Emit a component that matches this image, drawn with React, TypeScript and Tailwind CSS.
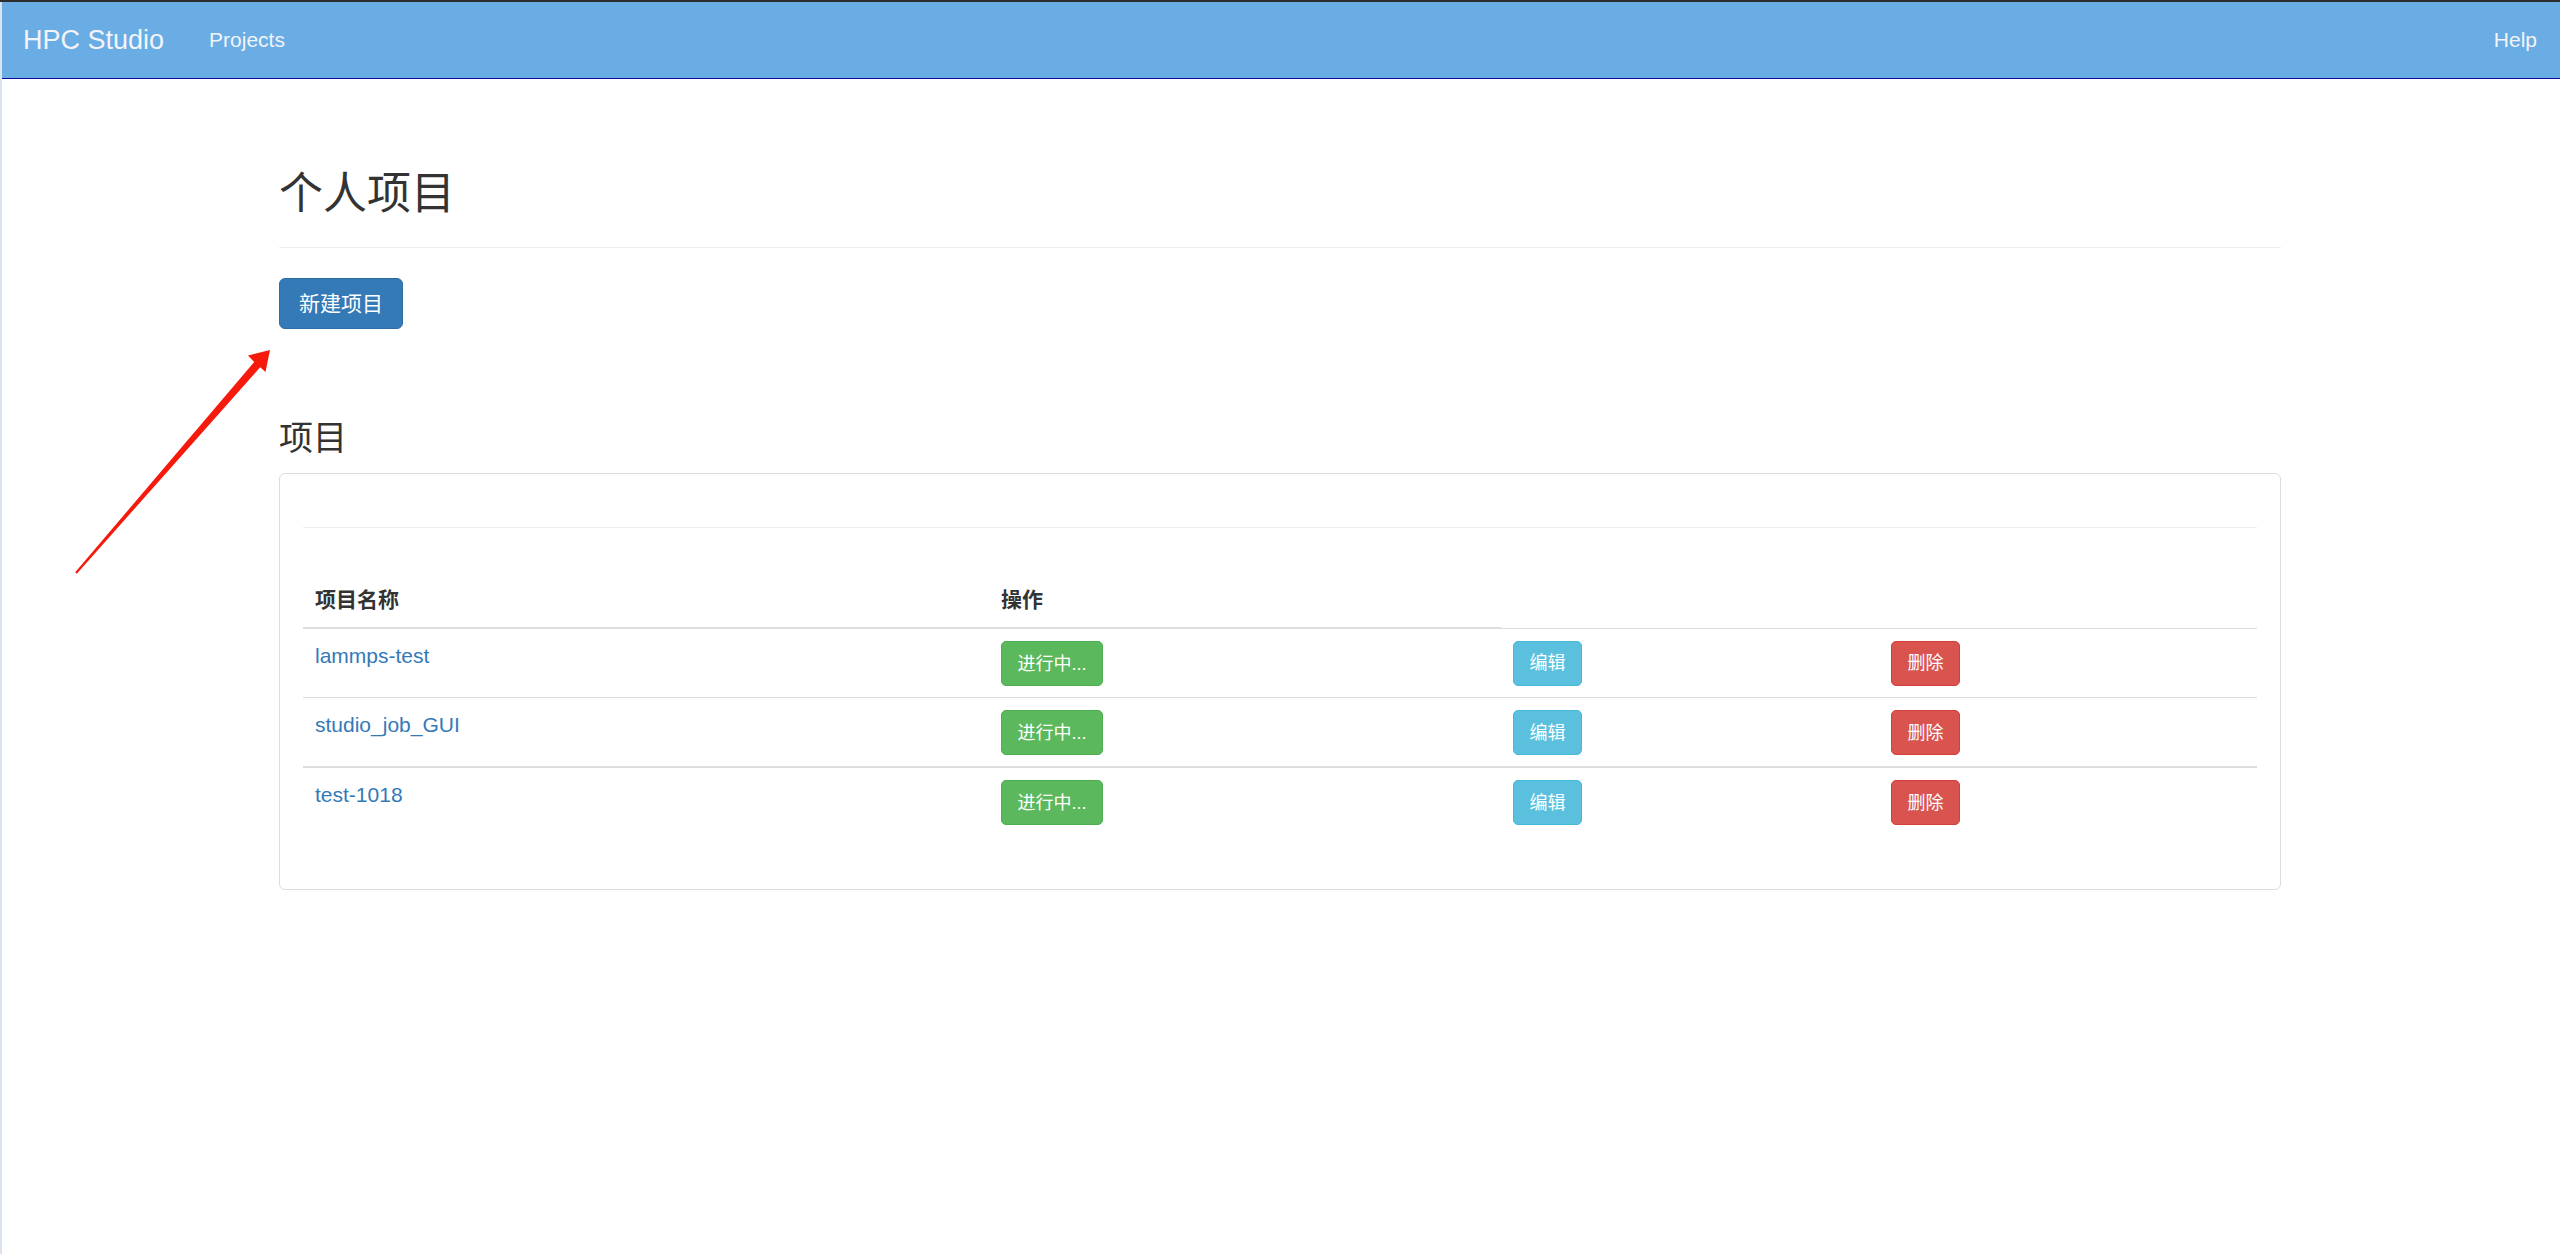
import React from "react";

const projects = ["lammps-test", "studio_job_GUI", "test-1018"];

function Arrow() {
  // red annotation arrow pointing at the "新建项目" button
  return (
    <svg className="pointer-events-none absolute left-0 top-0" width="300" height="600" viewBox="0 0 300 600">
      <polygon
        points="75.2,572.3 254.2,362 248,355.5 270,350 265.5,372 260.2,367.2 76.8,573.7"
        fill="#f51a0c"
      />
    </svg>
  );
}

function Btn({ color, children }: { color: "success" | "info" | "danger"; children: React.ReactNode }) {
  const cls = {
    success: "bg-[#5cb85c] border-[#4cae4c]",
    info: "bg-[#5bc0de] border-[#46b8da]",
    danger: "bg-[#d9534f] border-[#d43f3a]",
  }[color];
  return (
    <button
      className={`inline-flex h-[45px] items-center rounded-[5px] border px-[15.5px] text-[18px] leading-[28px] text-white ${cls}`}
    >
      {children}
    </button>
  );
}

export default function App() {
  return (
    <div className="relative min-h-screen bg-white font-['Liberation_Sans','Noto_Sans_CJK_SC',sans-serif] text-[#333]">
      <div className="h-[2px] bg-[#2d2d2d]" />
      <div className="flex">
        <div className="w-[2px] shrink-0 bg-[#dbe4ed]" />
        <div className="min-h-[1252px] flex-1">
          <nav className="flex h-[77px] items-center border-b border-[#0b0b9e] bg-[#6aace4] pl-[21px] pr-[23px] text-[#f2f4f8]">
            <span className="text-[27px] leading-[36px]">HPC Studio</span>
            <span className="ml-[45px] text-[21px] leading-[30px]">Projects</span>
            <span className="ml-auto text-[21px] leading-[30px]">Help</span>
          </nav>

          <main className="ml-[277px] w-[2002px]">
            <div className="mt-[91px] border-b border-[#eee] pb-[29px]">
              <h1 className="text-[44px] font-normal leading-[48px]">个人项目</h1>
            </div>

            <button className="mt-[30px] flex h-[51px] items-center rounded-[6px] border border-[#2e6da4] bg-[#337ab7] px-[19px] text-[21px] leading-[30px] text-white">
              新建项目
            </button>

            <h3 className="mb-[16px] mt-[91px] text-[34px] font-normal leading-[37px]">项目</h3>

            <div className="rounded-[6px] border border-[#ddd] px-[23px] pb-[53px] pt-[53px]">
              <div className="border-t border-[#eee]" />
              <table className="mt-[45px] w-full table-fixed text-[21px] leading-[30px]">
                <colgroup>
                  <col className="w-[686px]" />
                  <col className="w-[512px]" />
                  <col className="w-[378px]" />
                  <col />
                </colgroup>
                <thead>
                  <tr>
                    <th className="border-b-2 border-[#ddd] p-[12px] text-left align-bottom font-bold">项目名称</th>
                    <th className="border-b-2 border-[#ddd] p-[12px] text-left align-bottom font-bold">操作</th>
                  </tr>
                </thead>
                <tbody>
                  {projects.map((p, i) => {
                    const b = i === 2 ? "border-t-2" : "border-t";
                    return (
                      <tr key={p}>
                        <td className={`${b} border-[#ddd] px-[12px] pb-[11px] pt-[12px] align-top`}>
                          <a className="text-[#337ab7]" href="#">
                            {p}
                          </a>
                        </td>
                        <td className={`${b} border-[#ddd] px-[12px] pb-[11px] pt-[12px] align-top`}>
                          <Btn color="success">进行中...</Btn>
                        </td>
                        <td className={`${b} border-[#ddd] px-[12px] pb-[11px] pt-[12px] align-top`}>
                          <Btn color="info">编辑</Btn>
                        </td>
                        <td className={`${b} border-[#ddd] px-[12px] pb-[11px] pt-[12px] align-top`}>
                          <Btn color="danger">删除</Btn>
                        </td>
                      </tr>
                    );
                  })}
                </tbody>
              </table>
            </div>
          </main>
        </div>
      </div>
      <Arrow />
    </div>
  );
}
